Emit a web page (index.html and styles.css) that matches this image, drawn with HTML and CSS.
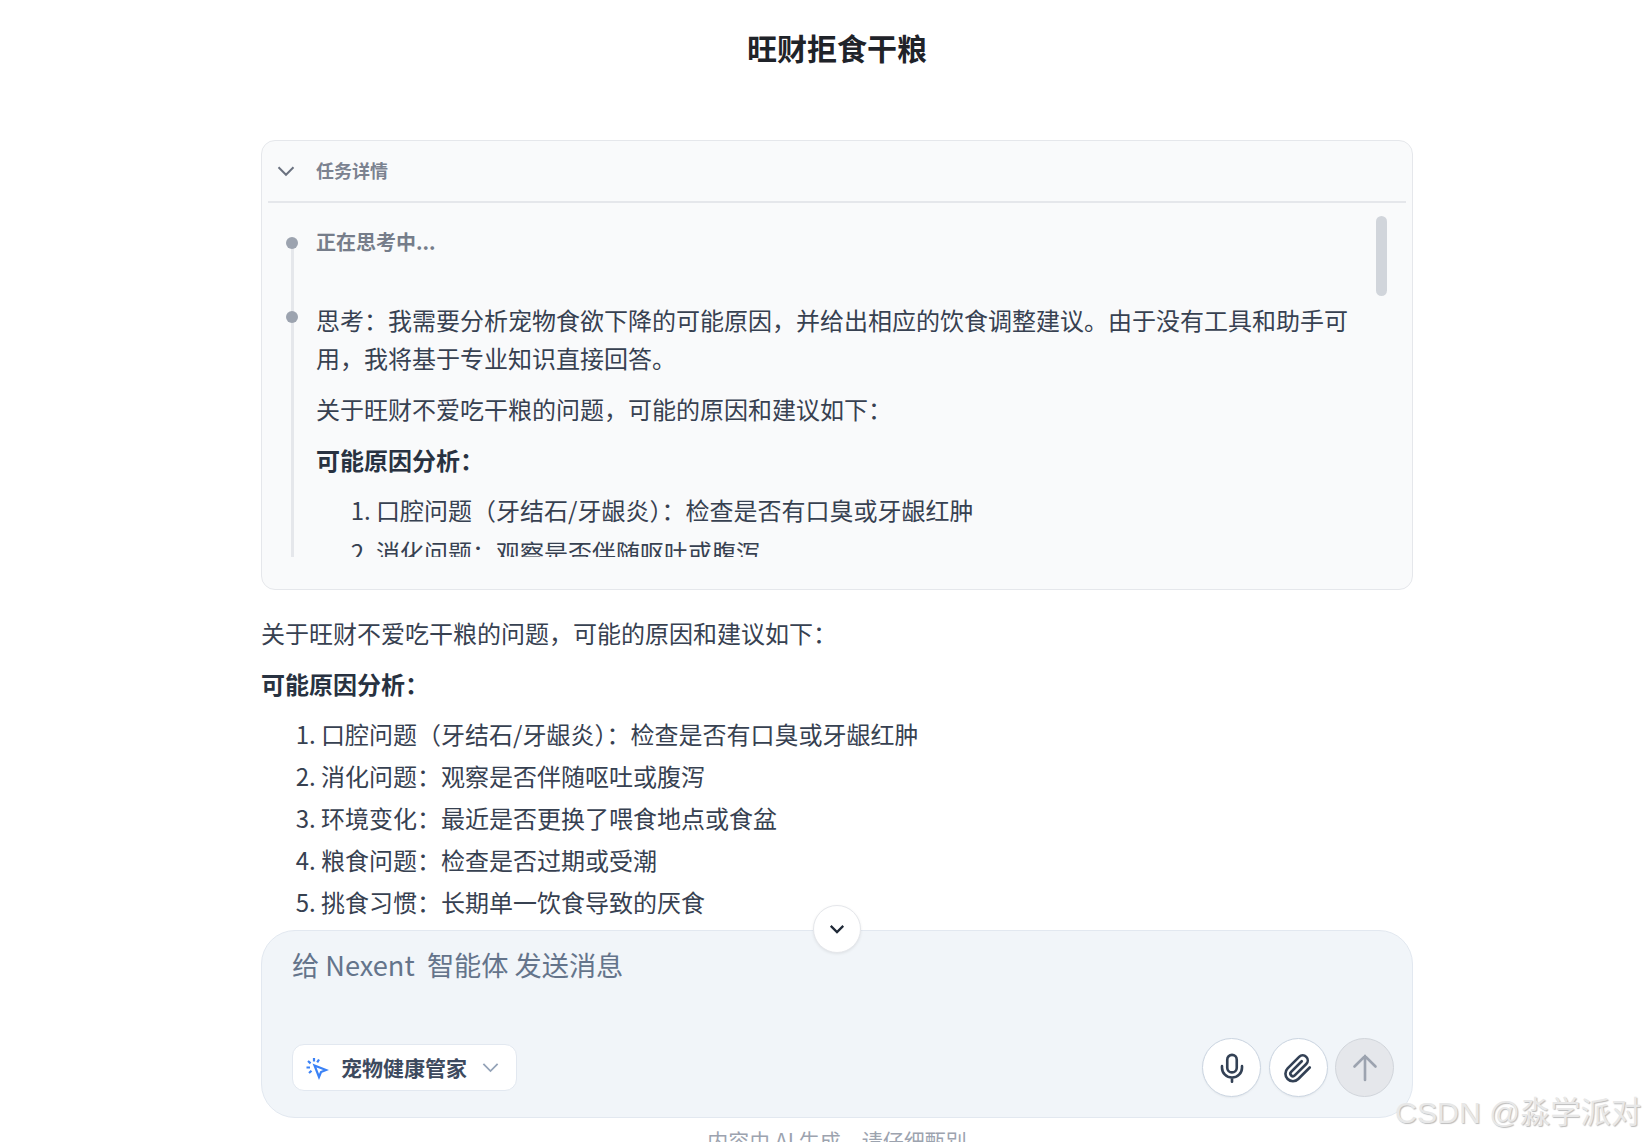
FILE: index.html
```html
<!DOCTYPE html>
<html lang="zh-CN">
<head>
    <meta charset="UTF-8">
    <meta name="viewport" content="width=device-width, initial-scale=1.0">
    <title>旺财拒食干粮</title>
    <link rel="stylesheet" href="styles.css">
</head>
<body>

    <div class="page">
        <h1 class="chat-title">旺财拒食干粮</h1>

        <div class="messages">
            <div class="task-card">
                <div class="task-head">
                    <svg class="task-chevron" viewBox="0 0 16 16"><path d="M2 5l6 6 6-6"/></svg>
                    <span>任务详情</span>
                </div>
                <div class="task-body">
                    <div class="timeline">
                        <div class="step">
                            <span class="step-dot"></span>
                            <p class="step-status">正在思考中...</p>
                        </div>
                        <div class="step">
                            <span class="step-dot"></span>
                            <p>思考：我需要分析宠物食欲下降的可能原因，并给出相应的饮食调整建议。由于没有工具和助手可用，我将基于专业知识直接回答。</p>
                            <p>关于旺财不爱吃干粮的问题，可能的原因和建议如下：</p>
                            <p><strong>可能原因分析：</strong></p>
                            <ol>
                                <li>口腔问题（牙结石/牙龈炎）：检查是否有口臭或牙龈红肿</li>
                                <li>消化问题：观察是否伴随呕吐或腹泻</li>
                                <li>环境变化：最近是否更换了喂食地点或食盆</li>
                            </ol>
                        </div>
                    </div>
                    <span class="scroll-thumb"></span>
                </div>
            </div>

            <div class="answer">
                <p>关于旺财不爱吃干粮的问题，可能的原因和建议如下：</p>
                <p><strong>可能原因分析：</strong></p>
                <ol>
                    <li>口腔问题（牙结石/牙龈炎）：检查是否有口臭或牙龈红肿</li>
                    <li>消化问题：观察是否伴随呕吐或腹泻</li>
                    <li>环境变化：最近是否更换了喂食地点或食盆</li>
                    <li>粮食问题：检查是否过期或受潮</li>
                    <li>挑食习惯：长期单一饮食导致的厌食</li>
                </ol>
            </div>
        </div>

        <div class="composer">
            <button class="scroll-down">
                <svg viewBox="0 0 16 16"><path d="M3 5.5l5 5 5-5"/></svg>
            </button>
            <div class="placeholder">给 Nexent &nbsp;智能体 发送消息</div>
            <div class="composer-bar">
                <div class="agent-chip">
                    <svg class="agent-icon" viewBox="0 0 24 24">
                        <path d="M9.5 9.5l11.5 4.5-5 2-2 5z"/>
                        <path d="M9 2v3.5M3 5l2.6 2.4M1.5 11.5H5M4 17l2.5-2.3M14 3.5l-1.8 2.8"/>
                    </svg>
                    <span class="agent-name">宠物健康管家</span>
                    <svg class="agent-chevron" viewBox="0 0 16 16"><path d="M2 5l6 6 6-6"/></svg>
                </div>
                <div class="composer-actions">
                    <button class="round-btn">
                        <svg viewBox="0 0 24 24">
                            <rect x="8.2" y="1.5" width="7.6" height="14" rx="3.8"/>
                            <path d="M4 10.5v1.2a8 8 0 0 0 16 0v-1.2M12 19.7v3.3"/>
                        </svg>
                    </button>
                    <button class="round-btn">
                        <svg viewBox="0 0 24 24">
                            <path d="M21.4 11.6l-9.2 9.2a6 6 0 0 1-8.5-8.5l9.2-9.2a4 4 0 0 1 5.7 5.7l-9.2 9.1a2 2 0 0 1-2.9-2.8l8.5-8.5"/>
                        </svg>
                    </button>
                    <button class="round-btn send-btn">
                        <svg viewBox="0 0 24 24"><path d="M12 21.6V2.4M3.6 10.8L12 2.4l8.4 8.4"/></svg>
                    </button>
                </div>
            </div>
        </div>

        <div class="disclaimer">内容由 AI 生成，请仔细甄别</div>
    </div>

    <div class="watermark">CSDN @淼学派对</div>

</body>
</html>
```

FILE: styles.css
```css
html, body {
    height: 100%;
    margin: 0;
    overflow: hidden;
}
body {
    font-family: "Noto Sans CJK SC", "Noto Sans", sans-serif;
    background-color: #fff;
    color: #374151;
}
.page {
    display: flex;
    flex-direction: column;
    width: 1152px;
    height: 100vh;
    margin-left: 261px;
}
.chat-title {
    flex: none;
    height: 98px;
    margin: 0;
    font-size: 30px;
    font-weight: 700;
    line-height: 94px;
    text-align: center;
    color: #1f2329;
}
.messages {
    flex: none;
    height: 832px;
    padding-top: 42px;
    box-sizing: border-box;
    overflow: hidden;
    font-size: 24px;
    line-height: 38.4px;
}
.messages p {
    margin: 0 0 12.6px;
}
.messages strong {
    font-weight: 700;
    color: #283241;
}
.messages ol {
    margin: -3px 0 0;
    padding-left: 60px;
}
.task-card {
    height: 450px;
    box-sizing: border-box;
    padding: 0 6px;
    background: #f9fafb;
    border: 1px solid #e5e7eb;
    border-radius: 14px;
}
.task-head {
    display: flex;
    align-items: center;
    height: 60px;
    border-bottom: 2px solid #e5e7eb;
    font-size: 18px;
    font-weight: 700;
    color: #7b8290;
}
.task-head span {
    margin-bottom: 2px;
}
.task-chevron {
    width: 20px;
    height: 20px;
    margin: 0 20px 0 8px;
    fill: none;
    stroke: #6b7280;
    stroke-width: 1.6;
}
.task-body {
    position: relative;
    height: 354px;
    box-sizing: border-box;
    overflow: hidden;
    padding: 22px 40px 0 48px;
}
.timeline {
    position: relative;
}
.timeline::before {
    content: "";
    position: absolute;
    left: -25px;
    top: 18px;
    width: 3px;
    height: 400px;
    background: #e5e7eb;
}
.step {
    position: relative;
}
.step-dot {
    position: absolute;
    left: -30px;
    top: 12px;
    width: 12px;
    height: 12px;
    border-radius: 50%;
    background: #9ca3af;
}
.step + .step .step-dot {
    top: 10px;
}
.messages .step-status {
    margin: 0 0 42px;
    font-size: 20px;
    line-height: 34px;
    font-weight: 700;
    color: #767d8a;
}
.task-body ol {
    line-height: 42px;
}
.scroll-thumb {
    position: absolute;
    right: 19px;
    top: 13px;
    width: 11px;
    height: 80px;
    border-radius: 6px;
    background: #d1d5db;
}
.answer {
    padding-top: 24px;
}
.answer ol {
    line-height: 42px;
}
.composer {
    position: relative;
    flex: none;
    display: flex;
    flex-direction: column;
    justify-content: space-between;
    height: 188px;
    box-sizing: border-box;
    padding: 13px 18px 20px 30px;
    background: #f1f5f9;
    border: 1px solid #e2e8f0;
    border-radius: 34px;
}
.scroll-down {
    position: absolute;
    top: -26px;
    left: 551px;
    display: flex;
    align-items: center;
    justify-content: center;
    width: 48px;
    height: 48px;
    padding: 0;
    background: #fff;
    border: 1px solid #e5e7eb;
    border-radius: 50%;
    box-shadow: 0 1px 3px rgba(0, 0, 0, 0.08);
}
.scroll-down svg {
    width: 20px;
    height: 20px;
    fill: none;
    stroke: #1f2937;
    stroke-width: 1.8;
}
.placeholder {
    font-size: 27.2px;
    line-height: 40px;
    color: #64748b;
}
.composer-bar {
    display: flex;
    align-items: center;
    justify-content: space-between;
}
.agent-chip {
    display: flex;
    align-items: center;
    width: 225px;
    height: 47px;
    box-sizing: border-box;
    padding-left: 12px;
    background: #fff;
    border: 1px solid #e2e8f0;
    border-radius: 12px;
    font-size: 21px;
    font-weight: 700;
    color: #3d4a5e;
}
.agent-name {
    margin-bottom: 2px;
}
.agent-icon {
    width: 24px;
    height: 24px;
    margin-right: 12px;
    fill: none;
    stroke: #3b82f6;
    stroke-width: 2.2;
}
.agent-chevron {
    width: 19px;
    height: 19px;
    margin-left: 14px;
    fill: none;
    stroke: #94a3b8;
    stroke-width: 1.5;
}
.composer-actions {
    display: flex;
    gap: 7.5px;
}
.round-btn {
    display: flex;
    align-items: center;
    justify-content: center;
    width: 59px;
    height: 59px;
    padding: 0;
    background: #fff;
    border: 1px solid #cbd5e1;
    border-radius: 50%;
    box-shadow: 0 1px 2px rgba(0, 0, 0, 0.05);
}
.round-btn svg {
    width: 30px;
    height: 30px;
    fill: none;
    stroke: #334155;
    stroke-width: 2.1;
    stroke-linecap: round;
}
.send-btn {
    background: #e5e7eb;
    border-color: #d1d5db;
    box-shadow: none;
}
.send-btn svg {
    stroke: #9ca3af;
}
.disclaimer {
    flex: none;
    margin-top: 7px;
    font-size: 21px;
    line-height: 30px;
    text-align: center;
    color: #9ca3af;
}
.watermark {
    position: absolute;
    left: 1395px;
    top: 1094px;
    font-family: "Liberation Sans", "Noto Sans CJK SC", sans-serif;
    font-size: 30.3px;
    line-height: 38px;
    white-space: nowrap;
    color: #e8e8e8;
    text-shadow: 1px 1px 1px #bcbcbc;
}
```
